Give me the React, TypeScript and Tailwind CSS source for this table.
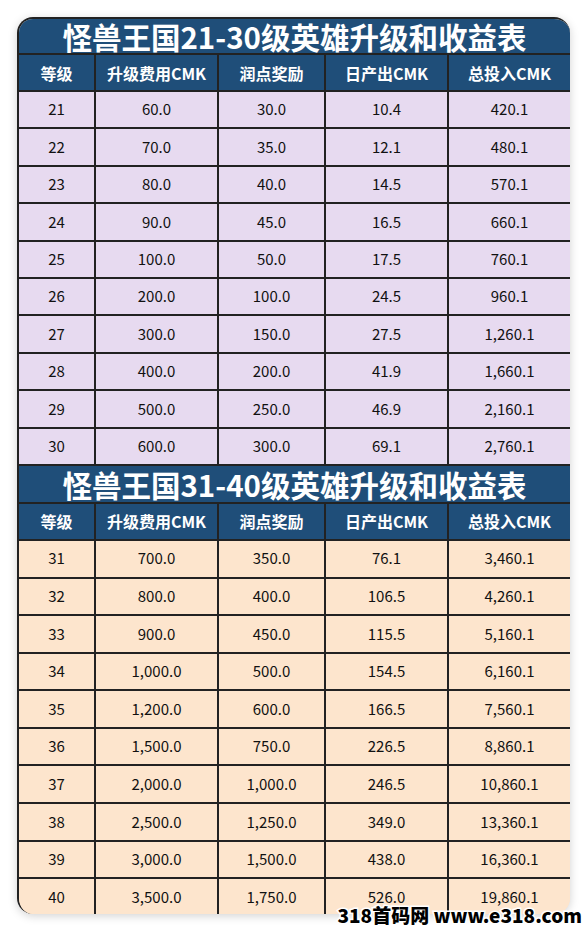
import * as React from "react";

type Row = [string, string, string, string, string];

const tableA: Row[] = [
  ["21", "60.0", "30.0", "10.4", "420.1"],
  ["22", "70.0", "35.0", "12.1", "480.1"],
  ["23", "80.0", "40.0", "14.5", "570.1"],
  ["24", "90.0", "45.0", "16.5", "660.1"],
  ["25", "100.0", "50.0", "17.5", "760.1"],
  ["26", "200.0", "100.0", "24.5", "960.1"],
  ["27", "300.0", "150.0", "27.5", "1,260.1"],
  ["28", "400.0", "200.0", "41.9", "1,660.1"],
  ["29", "500.0", "250.0", "46.9", "2,160.1"],
  ["30", "600.0", "300.0", "69.1", "2,760.1"],
];

const tableB: Row[] = [
  ["31", "700.0", "350.0", "76.1", "3,460.1"],
  ["32", "800.0", "400.0", "106.5", "4,260.1"],
  ["33", "900.0", "450.0", "115.5", "5,160.1"],
  ["34", "1,000.0", "500.0", "154.5", "6,160.1"],
  ["35", "1,200.0", "600.0", "166.5", "7,560.1"],
  ["36", "1,500.0", "750.0", "226.5", "8,860.1"],
  ["37", "2,000.0", "1,000.0", "246.5", "10,860.1"],
  ["38", "2,500.0", "1,250.0", "349.0", "13,360.1"],
  ["39", "3,000.0", "1,500.0", "438.0", "16,360.1"],
  ["40", "3,500.0", "1,750.0", "526.0", "19,860.1"],
];

const headers = ["等级", "升级费用CMK", "润点奖励", "日产出CMK", "总投入CMK"];

function Section({
  title,
  rows,
  rowBg,
  titleH,
  rowH,
}: {
  title: string;
  rows: Row[];
  rowBg: string;
  titleH: string;
  rowH: string;
}) {
  return (
    <>
      <div
        className={`flex shrink-0 items-center justify-center border-b-2 border-[#222] bg-[#1f4e79] text-[29.5px] leading-[34px] font-bold whitespace-nowrap text-white ${titleH}`}
      >
        {title}
      </div>
      <div className="grid h-[37px] shrink-0 grid-cols-[77px_123px_107px_123px_1fr] border-b-2 border-[#222] bg-[#1f4e79] text-[16px] font-bold text-white">
        {headers.map((h, i) => (
          <div
            key={h}
            className={`flex items-center justify-center ${i < 4 ? "border-r-2 border-[#222]" : ""}`}
          >
            {h}
          </div>
        ))}
      </div>
      {rows.map((r) => (
        <div
          key={r[0]}
          className={`grid shrink-0 grid-cols-[77px_123px_107px_123px_1fr] border-b-2 border-[#222] text-[15px] text-[#111] ${rowH} ${rowBg}`}
        >
          {r.map((v, i) => (
            <div
              key={i}
              className={`flex items-center justify-center ${i < 4 ? "border-r-2 border-[#222]" : ""}`}
            >
              {v}
            </div>
          ))}
        </div>
      ))}
    </>
  );
}

export default function App() {
  return (
    <div className="relative h-[932px] w-[587px] overflow-hidden bg-white pt-[17px] pl-[17px] font-['Noto_Sans_CJK_SC',sans-serif]">
      <div className="flex h-[897px] w-[553px] flex-col overflow-hidden rounded-2xl border-t-2 border-l-2 border-[#222] bg-[#fde5cd] shadow-[0_2px_10px_rgba(0,0,0,0.18)]">
        <Section
          title="怪兽王国21-30级英雄升级和收益表"
          rows={tableA}
          rowBg="bg-[#e7daf0]"
          titleH="h-[36px]"
          rowH="h-[37.4px]"
        />
        <Section
          title="怪兽王国31-40级英雄升级和收益表"
          rows={tableB}
          rowBg="bg-[#fde5cd]"
          titleH="h-[38px]"
          rowH="h-[37.6px]"
        />
      </div>
      <div className="absolute top-[902px] right-[5px] text-[19px] leading-[26px] font-black text-black [paint-order:stroke_fill] [-webkit-text-stroke:3px_white]">
        318首码网 www.e318.com
      </div>
    </div>
  );
}
